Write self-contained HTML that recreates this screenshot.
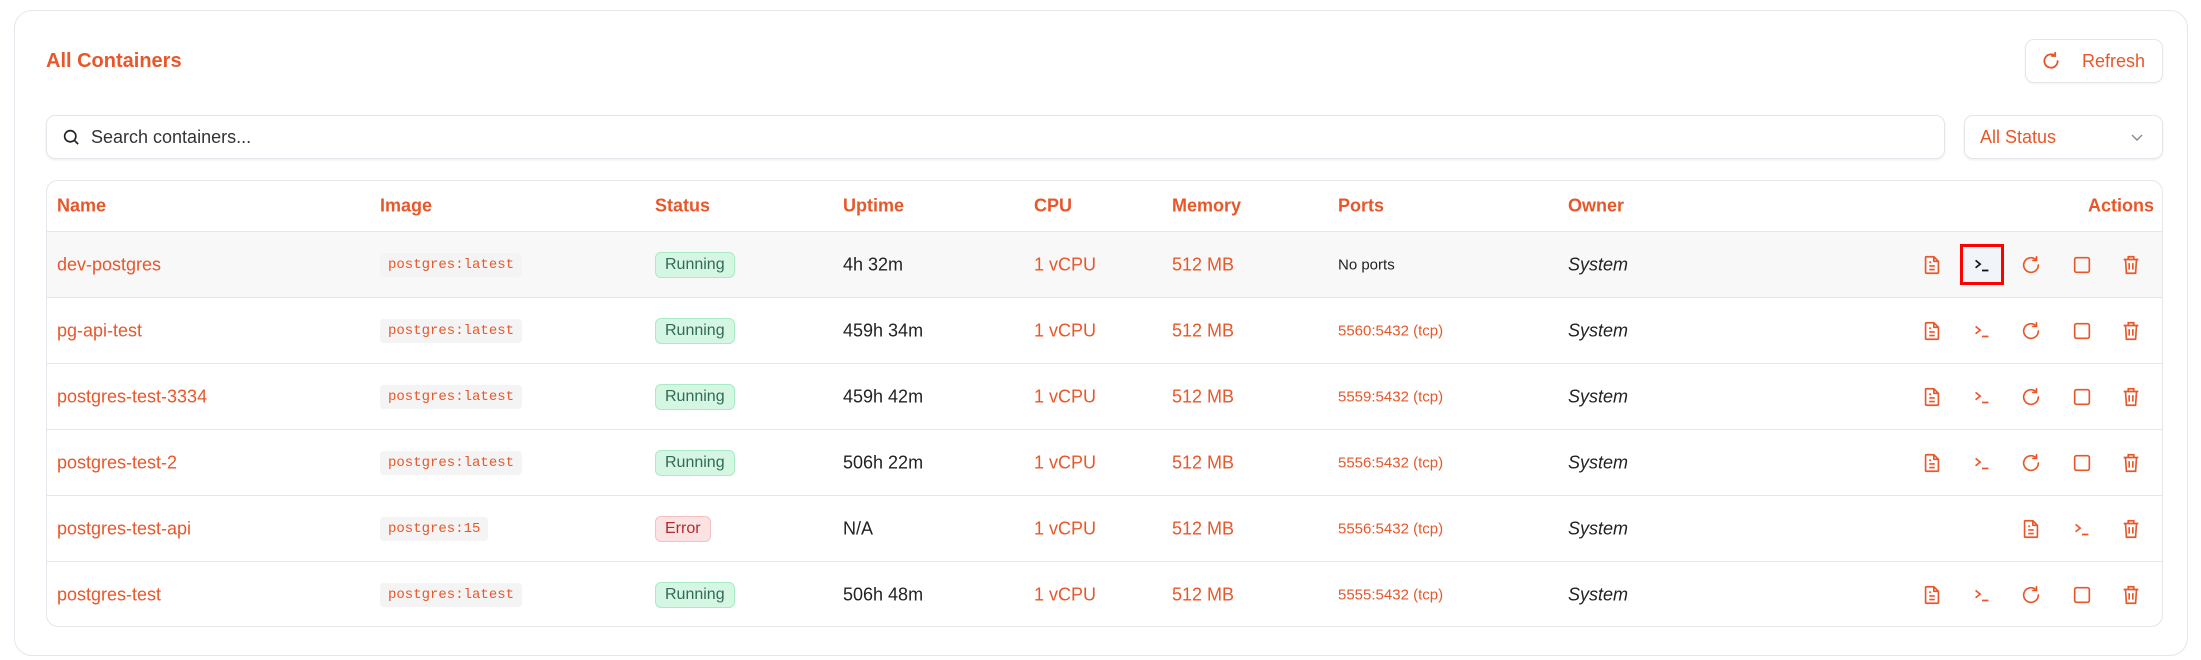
<!DOCTYPE html>
<html><head><meta charset="utf-8"><style>
*{box-sizing:border-box;margin:0;padding:0}
body{width:2201px;height:660px;background:#fff;font-family:"Liberation Sans",sans-serif;position:relative;overflow:hidden;color:#222}
.card{position:absolute;left:14px;top:10px;width:2174px;height:646px;border:1.5px solid #e3e6ea;border-radius:18px;background:#fff}
.abs{position:absolute}
.or{color:#e8572a}
.title{left:46px;top:50px;font-size:20px;font-weight:bold;color:#e8572a}
.btn{left:2025px;top:39px;width:138px;height:44px;border:1.5px solid #e3e6ea;border-radius:9px;box-shadow:0 1px 2px rgba(0,0,0,.06)}
.search{left:46px;top:115px;width:1899px;height:44px;border:1.5px solid #e3e6ea;border-radius:9px;box-shadow:0 1px 2px rgba(0,0,0,.08)}
.sel{left:1964px;top:115px;width:199px;height:44px;border:1.5px solid #e3e6ea;border-radius:9px;box-shadow:0 1px 2px rgba(0,0,0,.08)}
.table{left:46px;top:180px;width:2117px;height:447px;border:1.5px solid #e3e6ea;border-radius:12px;overflow:hidden}
.row{position:absolute;left:0;width:100%;height:66px;border-top:1.5px solid #e3e6ea}
.c{position:absolute;top:50%;transform:translateY(-50%);font-size:18px;white-space:nowrap}
.h{font-weight:bold;color:#e8572a}
.code{font-family:"Liberation Mono",monospace;font-size:14px;color:#e8572a;background:#f4f4f5;padding:4px 8px;border-radius:4px}
.run{font-size:16px;color:#2f6b55;background:#d5f6e3;border:1.5px solid #a7ecc5;padding:3px 9px;border-radius:6px}
.err{font-size:16px;color:#b22a2a;background:#fbe3e3;border:1.5px solid #f5c0c0;padding:3px 9px;border-radius:6px}
.ic{position:absolute;top:50%;transform:translate(-50%,-50%);width:22px;height:22px}
svg{display:block}
</style></head><body>
<div class="card"></div>
<div class="abs title">All Containers</div>
<div class="abs btn">
<svg class="abs" style="left:15px;top:11px" width="20" height="20" viewBox="0 0 24 24" fill="none" stroke="#e8572a" stroke-width="2.2" stroke-linecap="round"><path d="M20 12a8 8 0 1 1-3-6.2"/><path d="M17 2v4h-4"/></svg>
<span class="abs or" style="left:56px;top:11px;font-size:18px">Refresh</span></div>
<div class="abs search">
<svg class="abs" style="left:15px;top:12px" width="18" height="18" viewBox="0 0 24 24" fill="none" stroke="#222" stroke-width="2.2"><circle cx="11" cy="11" r="7.5"/><path d="M17 17l4.5 4.5"/></svg>
<span class="abs" style="left:44px;top:11px;font-size:18px;color:#333">Search containers...</span></div>
<div class="abs sel"><span class="abs or" style="left:15px;top:11px;font-size:18px">All Status</span>
<svg class="abs" style="left:166px;top:17px" width="12" height="10" viewBox="0 0 12 8" fill="none" stroke="#888" stroke-width="1.4"><path d="M1 1l5 5 5-5"/></svg></div>
<div class="abs table">
<div class="row" style="top:0;border-top:none;height:50px">
<span class="c h" style="left:10px">Name</span><span class="c h" style="left:333px">Image</span><span class="c h" style="left:608px">Status</span><span class="c h" style="left:796px">Uptime</span><span class="c h" style="left:987px">CPU</span><span class="c h" style="left:1125px">Memory</span><span class="c h" style="left:1291px">Ports</span><span class="c h" style="left:1521px">Owner</span><span class="c h" style="right:8px">Actions</span>
</div>
<div id="rows"></div>
</div>
<script>
var d=[["dev-postgres","postgres:latest",1,"4h 32m","No ports"],["pg-api-test","postgres:latest",1,"459h 34m","5560:5432 (tcp)"],["postgres-test-3334","postgres:latest",1,"459h 42m","5559:5432 (tcp)"],["postgres-test-2","postgres:latest",1,"506h 22m","5556:5432 (tcp)"],["postgres-test-api","postgres:15",0,"N/A","5556:5432 (tcp)"],["postgres-test","postgres:latest",1,"506h 48m","5555:5432 (tcp)"]];
var C='#e8572a';
function doc(c){return '<svg viewBox="0 0 24 24" width="22" height="22" fill="none" stroke="'+c+'" stroke-width="1.8" stroke-linejoin="round"><path d="M6 3h8l5 5v12a1 1 0 0 1-1 1H6a1 1 0 0 1-1-1V4a1 1 0 0 1 1-1z"/><path d="M14 3v5h5M9 9h2M9 13h6M9 17h6"/></svg>'}
function term(c){return '<svg viewBox="0 0 24 24" width="22" height="22" fill="none" stroke="'+c+'" stroke-width="1.8"><path d="M5 7l5 4-5 4M12 18h7"/></svg>'}
function ref(c){return '<svg viewBox="0 0 24 24" width="22" height="22" fill="none" stroke="'+c+'" stroke-width="1.8" stroke-linecap="round"><path d="M20 12a8 8 0 1 1-3-6.2"/><path d="M18 3v4h-4"/></svg>'}
function sq(c){return '<svg viewBox="0 0 24 24" width="22" height="22" fill="none" stroke="'+c+'" stroke-width="1.8"><rect x="4" y="4" width="16" height="16" rx="2"/></svg>'}
function tr(c){return '<svg viewBox="0 0 24 24" width="22" height="22" fill="none" stroke="'+c+'" stroke-width="1.8"><path d="M4 6h16M9 6V3h6v3M6 6l1 15h10l1-15M10 10v7M14 10v7"/></svg>'}
var h='';
d.forEach(function(r,i){
var top=50+i*66;
h+='<div class="row" style="top:'+top+'px;'+(i==0?'background:#f8f8f8':'')+'">';
h+='<span class="c or" style="left:10px">'+r[0]+'</span>';
h+='<span class="c code" style="left:333px">'+r[1]+'</span>';
h+=r[2]?'<span class="c run" style="left:608px">Running</span>':'<span class="c err" style="left:608px">Error</span>';
h+='<span class="c" style="left:796px">'+r[3]+'</span>';
h+='<span class="c or" style="left:987px">1 vCPU</span><span class="c or" style="left:1125px">512 MB</span>';
h+='<span class="c'+(i?' or':'')+'" style="left:1291px;font-size:15px">'+r[4]+'</span>';
h+='<span class="c" style="left:1521px;font-style:italic">System</span>';
var xs=[1885,1935,1984,2035,2084];
if(r[2]){
 if(i==0)h+='<div style="position:absolute;left:1913px;top:12px;width:44px;height:41px;border:3px solid #f00;background:#f1f4f8"></div>';
 h+='<div class="ic" style="left:'+xs[0]+'px">'+doc(C)+'</div><div class="ic" style="left:'+xs[1]+'px">'+term(i==0?'#111':C)+'</div><div class="ic" style="left:'+xs[2]+'px">'+ref(C)+'</div><div class="ic" style="left:'+xs[3]+'px">'+sq(C)+'</div><div class="ic" style="left:'+xs[4]+'px">'+tr(C)+'</div>';
}else{
 h+='<div class="ic" style="left:'+xs[2]+'px">'+doc(C)+'</div><div class="ic" style="left:'+xs[3]+'px">'+term(C)+'</div><div class="ic" style="left:'+xs[4]+'px">'+tr(C)+'</div>';
}
h+='</div>';});
document.getElementById('rows').innerHTML=h;
</script>
</body></html>
